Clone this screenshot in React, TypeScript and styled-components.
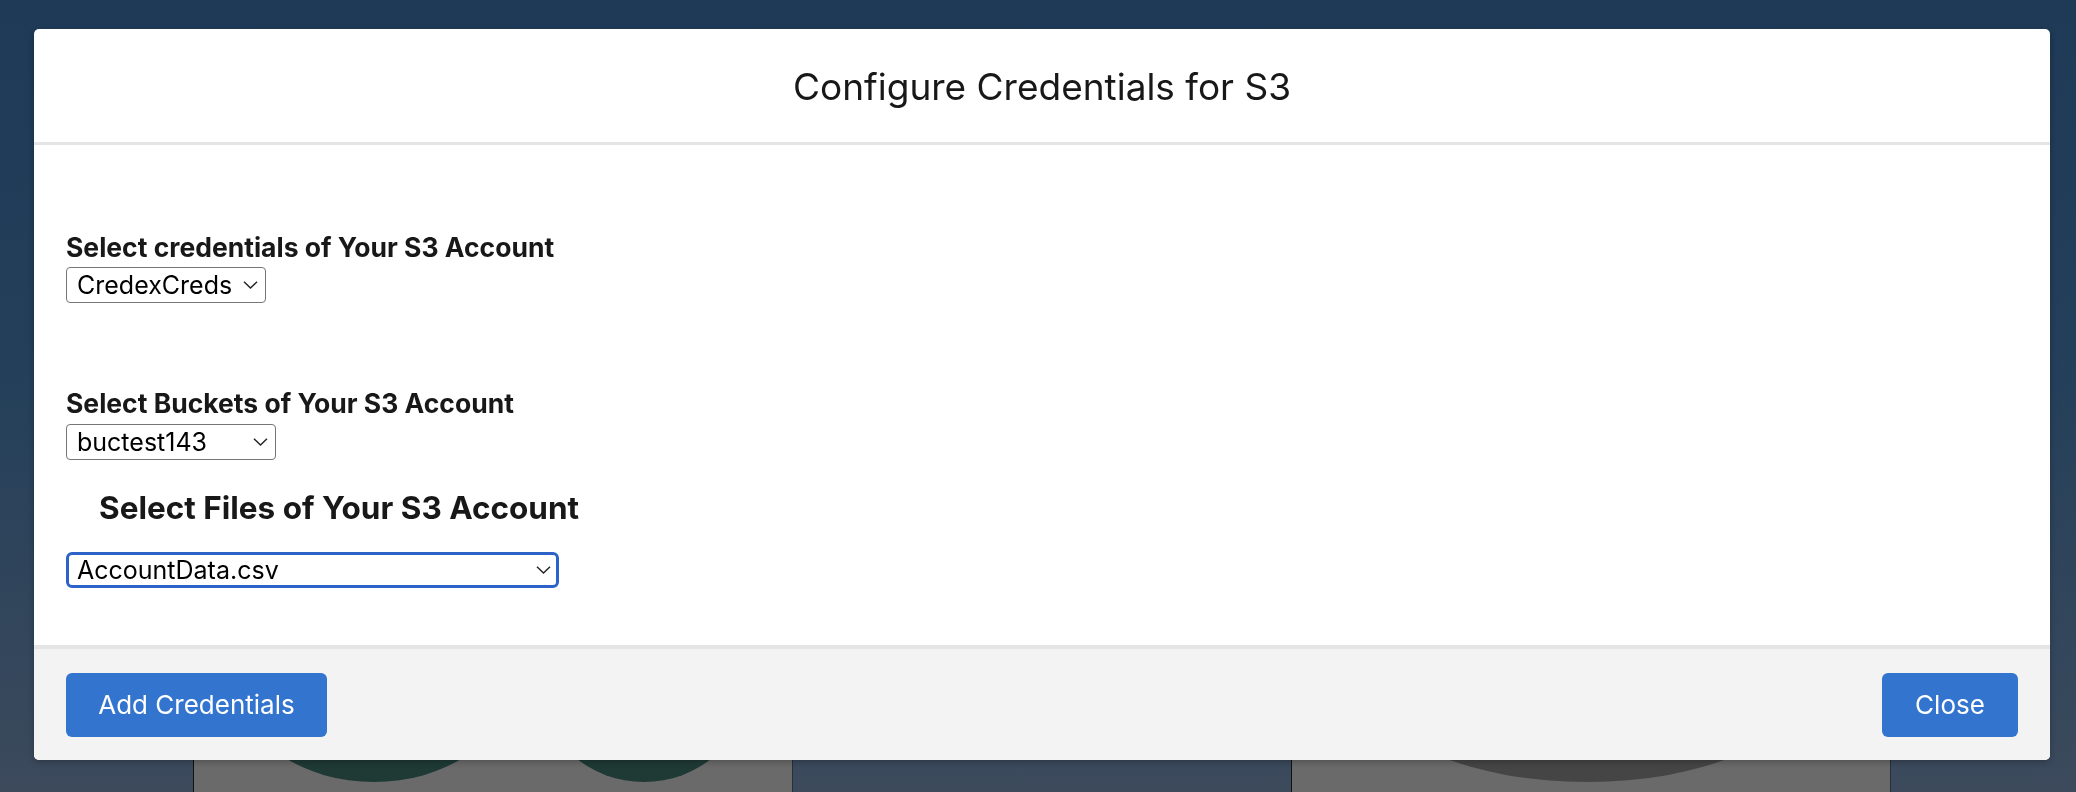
import React from "react";
import styled, { createGlobalStyle } from "styled-components";

const GlobalStyle = createGlobalStyle`
  html, body { margin: 0; padding: 0; }
  body {
    font-family: Inter, "Noto Sans", "Liberation Sans", sans-serif;
    color: #181818;
    overflow: hidden;
  }
  * { box-sizing: border-box; }
`;

const Page = styled.div`
  width: 2076px;
  height: 792px;
  background: linear-gradient(180deg, #1e3a56 0%, #233f5a 45%, #3c4a5c 100%);
  display: flex;
  flex-direction: column;
  justify-content: flex-end;
  overflow: hidden;
`;

const CardRow = styled.div`
  display: flex;
  gap: 498px;
  padding-left: 193px;
  height: 40px;
`;

const BgCard = styled.div`
  width: 600px;
  height: 100%;
  background: #6a6a6a;
  border-left: 1px solid #111;
  border-right: 1px solid #2a2f38;
  position: relative;
  overflow: hidden;
`;

const Blob = styled.div<{ $left: number; $w: number; $color: string }>`
  position: absolute;
  top: -120px;
  left: ${(p) => p.$left}px;
  width: ${(p) => p.$w}px;
  height: 150px;
  border-radius: 0 0 50% 50% / 0 0 60% 60%;
  background: ${(p) => p.$color};
`;

const Layer = styled.div`
  position: fixed;
  inset: 0;
  padding: 29px 26px 32px 34px;
  display: flex;
`;

const Modal = styled.section`
  flex: 1;
  background: #fff;
  border-radius: 5px;
  overflow: hidden;
  display: flex;
  flex-direction: column;
  box-shadow: 0 2px 6px rgba(0, 0, 0, 0.25);
`;

const Header = styled.header`
  height: 116px;
  border-bottom: 3px solid #e5e5e5;
  display: flex;
  align-items: center;
  justify-content: center;
  padding-top: 4px;
`;

const Title = styled.h2`
  margin: 0;
  font-weight: 400;
  font-size: 37px;
  line-height: 1.2;
  color: #181818;
`;

const Body = styled.div`
  flex: 1;
  padding: 89px 32px 0;
  display: flex;
  flex-direction: column;
  align-items: flex-start;
`;

const Label = styled.label<{ $mt?: number }>`
  display: block;
  margin-top: ${(p) => p.$mt ?? 0}px;
  font-weight: 700;
  font-size: 26.5px;
  line-height: 26px;
  color: #181818;
`;

const SectionHeading = styled.h3`
  margin: 30px 0 0 33px;
  font-weight: 700;
  font-size: 31.5px;
  line-height: 36px;
  color: #181818;
`;

const SelectWrap = styled.div<{ $w: number; $mt?: number }>`
  position: relative;
  width: ${(p) => p.$w}px;
  height: 36px;
  margin-top: ${(p) => p.$mt ?? 0}px;
`;

const NativeSelect = styled.select<{ $focus?: boolean }>`
  appearance: none;
  -webkit-appearance: none;
  width: 100%;
  height: 100%;
  margin: 0;
  padding: 0 30px 0 ${(p) => (p.$focus ? 8 : 10)}px;
  border: ${(p) => (p.$focus ? "3px solid #2d63c8" : "1px solid #767676")};
  border-radius: ${(p) => (p.$focus ? 6 : 4)}px;
  background: #fff;
  font-family: Inter, "Noto Sans", "Liberation Sans", sans-serif;
  font-size: 25px;
  color: #000;
  outline: none;
`;

const Chevron = styled.svg`
  position: absolute;
  right: 8px;
  top: 50%;
  width: 15px;
  height: 9px;
  transform: translateY(-50%);
  pointer-events: none;
`;

const Footer = styled.footer`
  height: 115px;
  background: #f3f3f3;
  border-top: 4px solid #e5e5e5;
  display: flex;
  align-items: center;
  justify-content: space-between;
  padding: 0 32px;
`;

const Button = styled.button<{ $w: number }>`
  width: ${(p) => p.$w}px;
  height: 64px;
  border: none;
  border-radius: 6px;
  background: #3374cf;
  color: #fff;
  font-family: Inter, "Noto Sans", "Liberation Sans", sans-serif;
  font-size: 26px;
  font-weight: 400;
  cursor: pointer;
`;

type SelectProps = { width: number; mt?: number; focus?: boolean; value: string; options: string[] };

const Select: React.FC<SelectProps> = ({ width, mt, focus, value, options }) => (
  <SelectWrap $w={width} $mt={mt}>
    <NativeSelect $focus={focus} defaultValue={value}>
      {options.map((o) => (
        <option key={o} value={o}>
          {o}
        </option>
      ))}
    </NativeSelect>
    <Chevron viewBox="0 0 15 9" fill="none">
      <path d="M1 1.2 L7.5 7.6 L14 1.2" stroke="#222" strokeWidth="1.4" />
    </Chevron>
  </SelectWrap>
);

export default function App() {
  return (
    <>
      <GlobalStyle />
      <Page>
        <CardRow>
          <BgCard>
            <Blob $left={50} $w={260} $color="#1f3a35" />
            <Blob $left={350} $w={200} $color="#1f3a35" />
          </BgCard>
          <BgCard>
            <Blob $left={86} $w={418} $color="#454545" />
          </BgCard>
        </CardRow>
      </Page>
      <Layer>
        <Modal>
          <Header>
            <Title>Configure Credentials for S3</Title>
          </Header>
          <Body>
            <Label>Select credentials of Your S3 Account</Label>
            <Select width={200} mt={7} value="CredexCreds" options={["CredexCreds"]} />
            <Label $mt={87}>Select Buckets of Your S3 Account</Label>
            <Select width={210} mt={8} value="buctest143" options={["buctest143", "bucketdemo01"]} />
            <SectionHeading>Select Files of Your S3 Account</SectionHeading>
            <Select width={493} mt={26} focus value="AccountData.csv" options={["AccountData.csv"]} />
          </Body>
          <Footer>
            <Button $w={261}>Add Credentials</Button>
            <Button $w={136}>Close</Button>
          </Footer>
        </Modal>
      </Layer>
    </>
  );
}
